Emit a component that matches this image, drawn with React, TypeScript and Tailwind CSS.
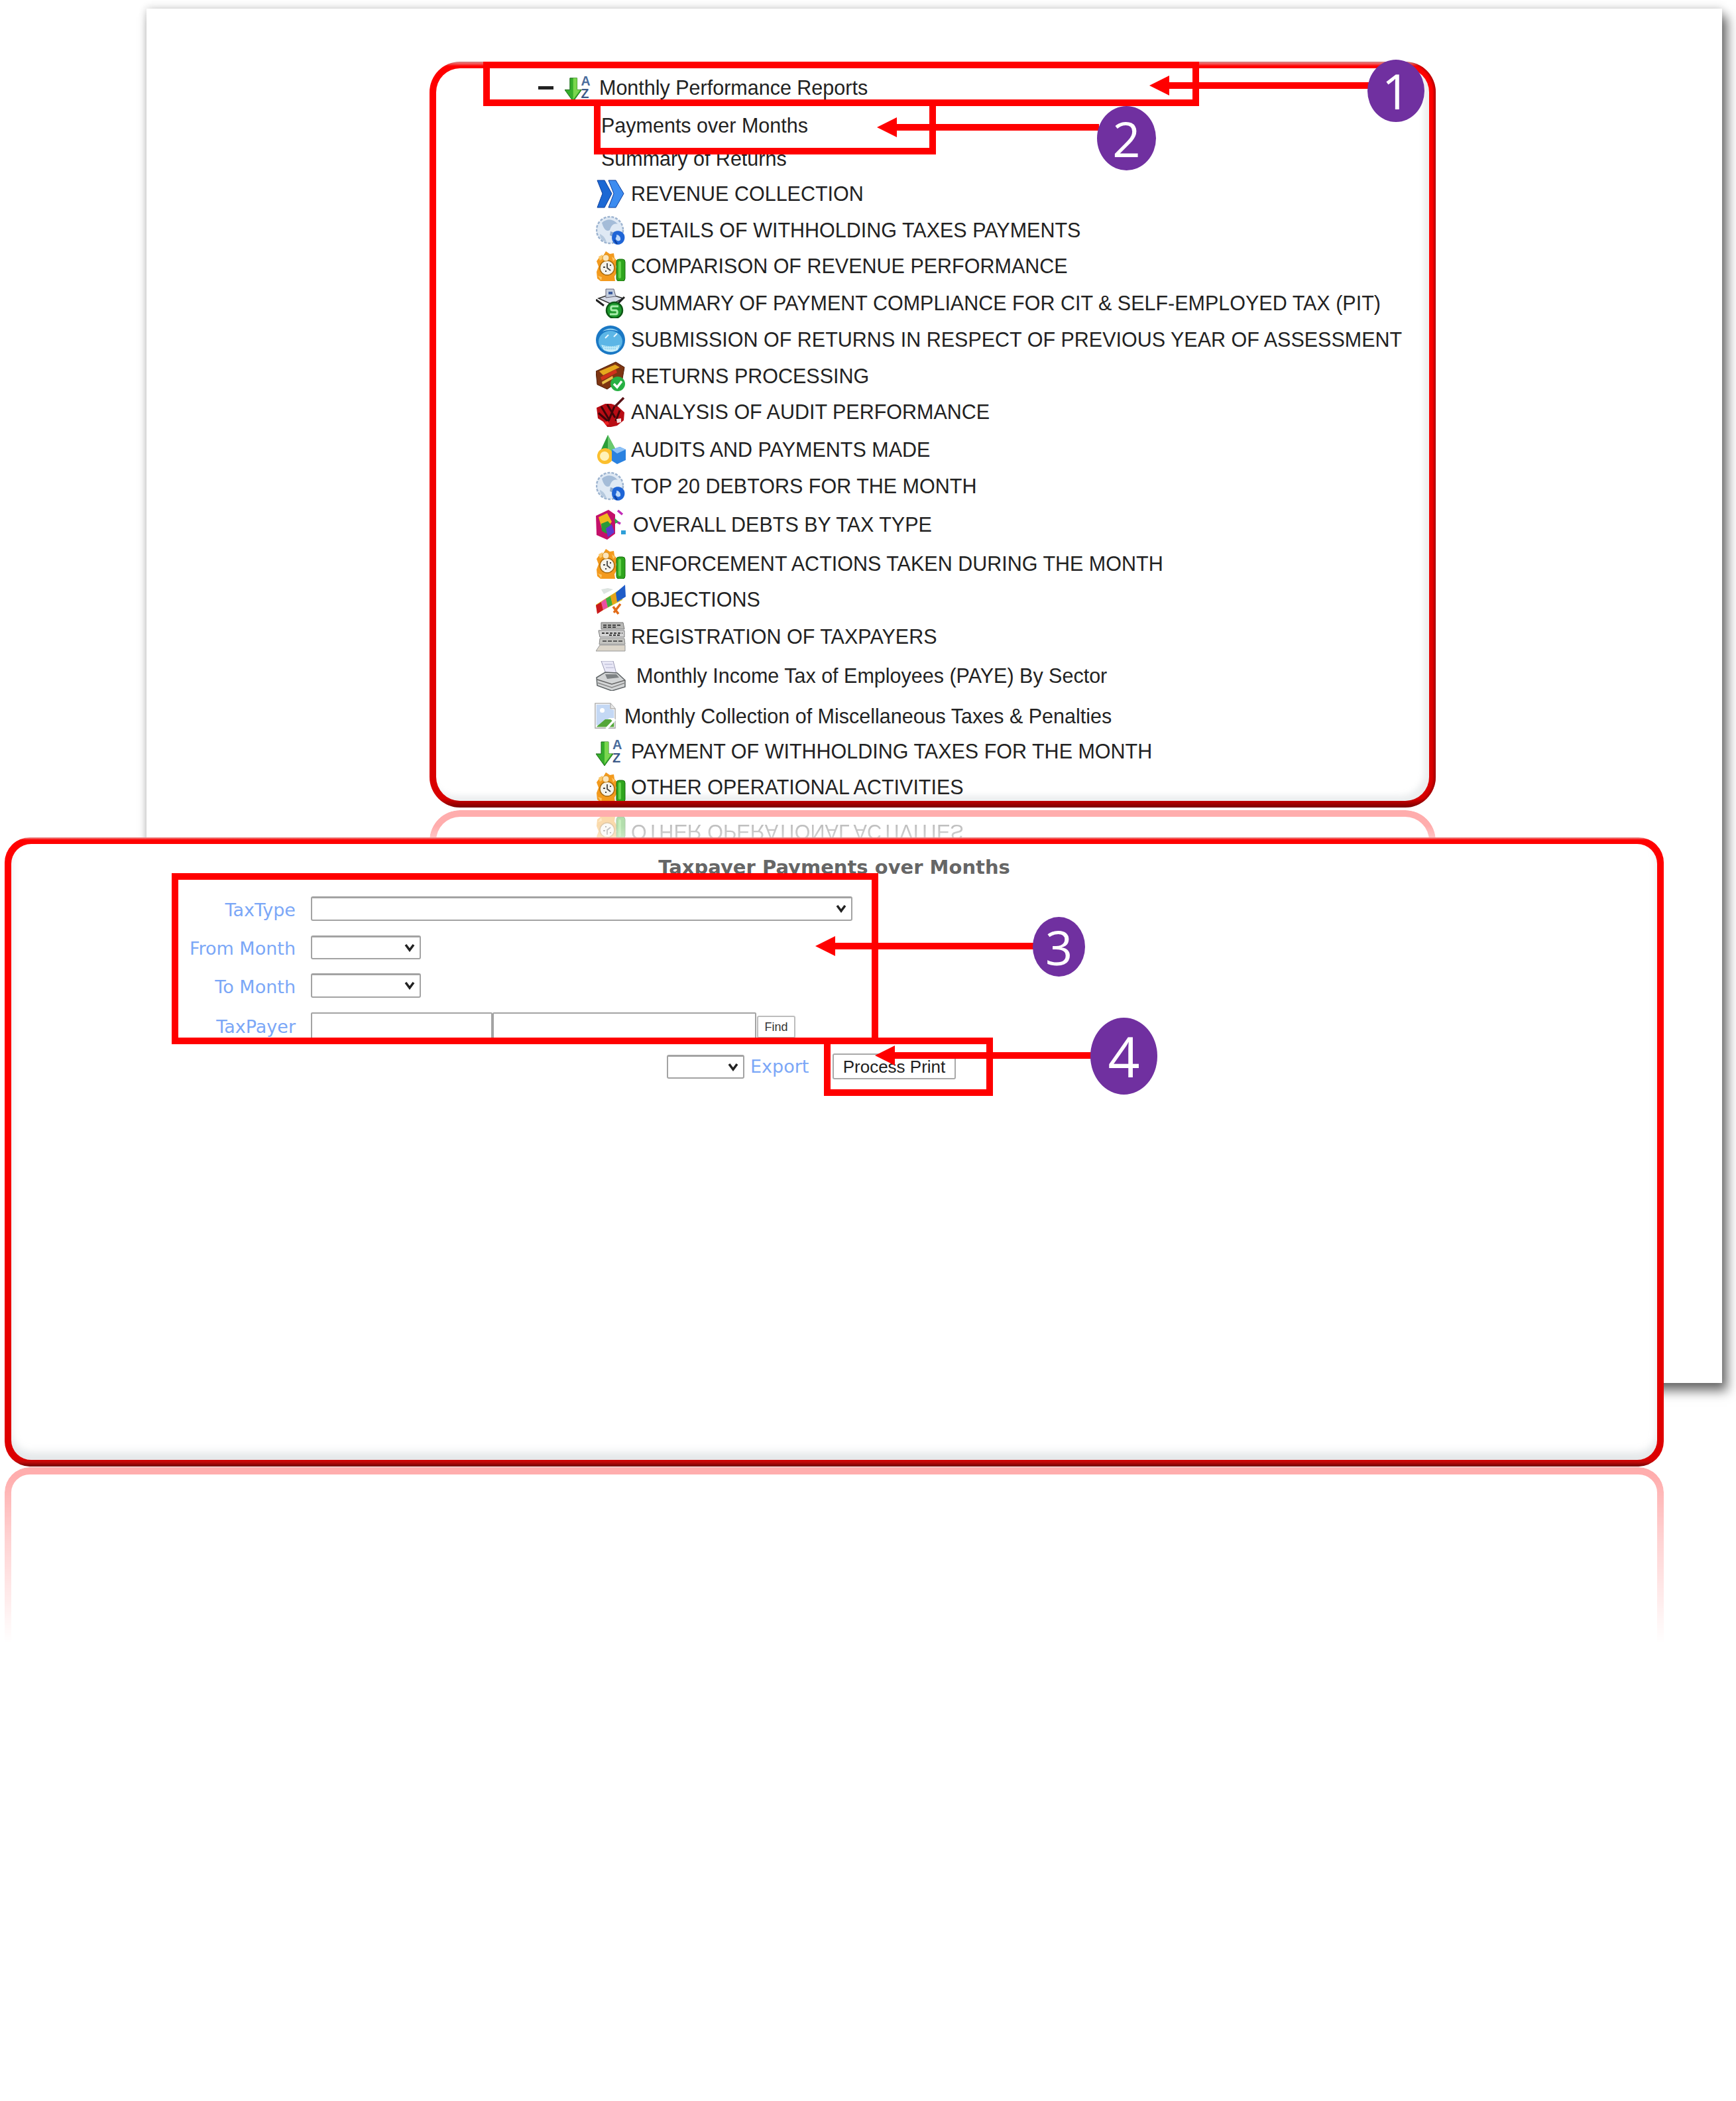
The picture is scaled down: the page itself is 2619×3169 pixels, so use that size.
type IconName =
  | 'chevrons' | 'globe' | 'clock' | 'scale' | 'sphere' | 'box' | 'blob'
  | 'cone' | 'cube' | 'rainbow' | 'stack' | 'printer' | 'broken' | 'arrowaz'

function ReportIcon({ name, className = 'h-[45px] w-[45px]' }: { name: IconName; className?: string }) {
  return (
    <svg viewBox="0 0 45 45" className={className}>
      {name === 'chevrons' && (
        <g fill="#1b68d4" stroke="#0d3f9c" strokeWidth="1">
          <path d="M2 2h11l11 20-11 21H2l8-21z" />
          <path d="M19 2h11l12 20-12 21H19l8-21z" fill="#3d8cf0" />
        </g>
      )}
      {name === 'globe' && (
        <g>
          <circle cx="21" cy="22" r="20" fill="#dfe9f4" stroke="#9db4d0" strokeWidth="2.5" strokeDasharray="4 2" />
          <path d="M9 11c8-7 17-6 24 2-7-2-10 3-12 9-5 3-9-1-12-11z" fill="#a4bcd8" />
          <path d="M6 28c5 2 8 6 10 12-6-1-10-6-10-12z" fill="#b6c9de" />
          <path d="M22 24l6 2-2 6-5-2z" fill="#88a6cc" />
          <path d="M27 25c6-4 14-1 16 5 2 7-3 14-10 14-8 0-12-11-6-19z" fill="#1f65d6" />
          <path d="M31 29c3 0 7 3 6 8-2 2-5 2-7-1-1-3 2-3 1-7z" fill="#bcd8fa" />
          <path d="M28 37l4 6" stroke="#0d3c98" strokeWidth="2" />
        </g>
      )}
      {name === 'clock' && (
        <g>
          <path d="M15 0l6 4 6-1 1 7 5 6-3 7 2 8-4 7 1 7H7l-5-4-1-10 3-8-3-8 5-7 5-1z" fill="#f39a1d" />
          <path d="M4 8l6-3 1 6-5 3zM24 8l5 4-3 3zM3 37l6 2-1 5z" fill="#fbc768" />
          <circle cx="17" cy="25" r="11" fill="#f4f2ea" stroke="#a86a0c" strokeWidth="1.5" />
          <circle cx="15" cy="10" r="5" fill="#fbe6bd" stroke="#d78e1c" />
          <path d="M17 18v7l5 4M11 24h3M21 21h2M14 30h2" stroke="#444" strokeWidth="1.8" fill="none" />
          <rect x="31" y="12" width="13" height="33" rx="4" fill="#2fa51d" stroke="#146b0a" />
          <rect x="34" y="15" width="4" height="26" rx="2" fill="#63d24a" />
        </g>
      )}
      {name === 'scale' && (
        <g>
          <path d="M4 15l18-6 19 6-17 9z" fill="#d6dbe6" stroke="#333" strokeWidth="1.5" />
          <path d="M15 1l12 0 3 11-15 2z" fill="#c4cede" stroke="#667" />
          <rect x="19" y="5" width="6" height="4" fill="#3e5c9c" />
          <path d="M0 17l12 9M43 13l-9 9" stroke="#222" strokeWidth="3" />
          <circle cx="28" cy="33" r="12" fill="#1e9a2e" stroke="#0d5615" strokeWidth="2.5" />
          <path d="M34 27h-9c-3 0-3 6 0 6h5c3 0 3 6 0 6h-9" stroke="#a8ecaa" strokeWidth="3" fill="none" />
        </g>
      )}
      {name === 'sphere' && (
        <g>
          <ellipse cx="22" cy="23" rx="22" ry="22" fill="#1a78c4" />
          <ellipse cx="22" cy="25" rx="18" ry="16" fill="#5cb6e6" />
          <path d="M8 30c9 3 20 3 28 0l-3 8c-7 4-15 3-21 0z" fill="#c9eefa" />
          <path d="M11 33h22M13 36h18" stroke="#7ccbec" strokeWidth="1.5" strokeDasharray="2 1" />
          <path d="M14 20l5-5M27 18l5-5" stroke="#e8f7ff" strokeWidth="2" />
          <path d="M10 10c6-6 18-6 24 0-8-3-16-3-24 0z" fill="#8fd0f2" />
        </g>
      )}
      {name === 'box' && (
        <g>
          <path d="M0 15L30 1l13 8-3 17-23 16L2 35z" fill="#7e3512" stroke="#4c1c06" />
          <path d="M5 15l24-10 7 4-25 12z" fill="#e6a81e" />
          <path d="M7 24l23-12 2 5-23 12z" fill="#d0301a" />
          <path d="M9 31l16-9 1 4-16 9z" fill="#eac04a" />
          <circle cx="33" cy="34" r="11" fill="#27b043" />
          <path d="M27 34l5 5 7-9" stroke="#fff" strokeWidth="3.5" fill="none" />
        </g>
      )}
      {name === 'blob' && (
        <g>
          <path d="M1 16l13-6 9 0 9 3 11 10-1 12-10 8-14 3-7-9-8-5z" fill="#b80c14" />
          <path d="M8 14l12 20M17 11l12 20M4 24l15 13M28 14l-9 22M36 20l-6 16" stroke="#3f0509" strokeWidth="3" fill="none" />
          <path d="M29 14L42 1" stroke="#5b1216" strokeWidth="3.5" />
          <path d="M31 33l7-1 0 6-6 1z" fill="#f6dada" />
          <path d="M12 38l6-2 2 5-5 1z" fill="#e22" />
        </g>
      )}
      {name === 'cone' && (
        <g>
          <path d="M18 0l14 26H6z" fill="#2c9e39" />
          <path d="M18 0l14 26H18z" fill="#69c96e" />
          <circle cx="14" cy="32" r="12" fill="#fbbf2e" />
          <circle cx="13" cy="32" r="7" fill="#fff2b8" />
          <path d="M24 22l12-4 9 4v16l-13 6-8-5z" fill="#2a82e0" />
          <path d="M36 18l9 4-13 6-8-6z" fill="#8cc1f6" />
        </g>
      )}
      {name === 'cube' && (
        <g>
          <path d="M0 9L19 0l10 7v29l-12 9-16-7z" fill="#c4106a" />
          <path d="M4 11l13-6 7 13-10 12-5-2z" fill="#f0b81e" />
          <path d="M8 21l10-4 7 8-9 11-7-4z" fill="#2a9a3a" />
          <path d="M15 28l9-6 4 12-10 7z" fill="#5b3bd0" />
          <path d="M33 1l7 6M30 17l7 4" stroke="#c12bb7" strokeWidth="3.5" />
          <rect x="38" y="31" width="7" height="6" fill="#2f9fd8" />
          <path d="M28 12l6 6-5 3z" fill="#2fa84a" />
        </g>
      )}
      {name === 'rainbow' && (
        <g>
          <path d="M0 30L38 6l2 17L2 43z" fill="#d8c02a" />
          <path d="M0 31l8-5 3 12-9 6z" fill="#c9181d" />
          <path d="M8 26l7-5 3 13-7 4z" fill="#e94fa2" />
          <path d="M15 21l7-4 3 13-7 4z" fill="#3fae3f" />
          <path d="M22 17l8-5 2 13-7 5z" fill="#e8a318" />
          <path d="M30 12l14-12 1 18-13 8z" fill="#1f5cc8" />
          <path d="M26 33l8 11M37 29l-10 13" stroke="#e26b18" strokeWidth="3.5" />
          <path d="M8 7l10-2 8 2-14 7z" fill="#dde4e0" />
        </g>
      )}
      {name === 'stack' && (
        <g>
          <path d="M8 1h33l2 10H8z" fill="#b8b8b6" stroke="#777" />
          <path d="M11 5h28M11 8h20" stroke="#444" strokeWidth="2" strokeDasharray="5 2" />
          <path d="M4 13h39v10H6z" fill="#d4d4d4" stroke="#777" />
          <path d="M9 17h31M20 20h16" stroke="#333" strokeWidth="2" strokeDasharray="4 2" />
          <path d="M6 25h37l1 9H5z" fill="#c4c4c0" stroke="#888" />
          <path d="M10 29h30" stroke="#555" strokeWidth="2" strokeDasharray="6 2" />
          <path d="M0 44l6-9h38v9z" fill="#dcd6ca" stroke="#999" />
        </g>
      )}
      {name === 'printer' && (
        <g>
          <path d="M8 0l18 0 5 19H15z" fill="#e9e8f6" stroke="#9a9ab4" />
          <path d="M13 5l12 0M15 10l12 0" stroke="#c3c3dc" strokeWidth="1.5" />
          <path d="M1 25l13-8 18 1 12 11v10L24 45 2 37z" fill="#d3d5d6" stroke="#5f6466" strokeWidth="1.5" />
          <path d="M2 28l22 7 20-6" stroke="#666" strokeWidth="1.5" fill="none" />
          <path d="M3 33l21 7 20-7" stroke="#888" strokeWidth="1.5" fill="none" />
          <path d="M14 20l17 0 4 5-18 2z" fill="#7e8284" />
        </g>
      )}
      {name === 'broken' && (
        <g>
          <path d="M1 1h26l8 9v33H1z" fill="#fff" stroke="#a8a8a8" strokeWidth="1.5" />
          <path d="M27 1v9h8" fill="#e8e8e8" stroke="#a8a8a8" strokeWidth="1.5" />
          <path d="M3 3h23v8l7 1v14l-8 0-14 12H3z" fill="#c4d8f4" />
          <circle cx="13" cy="13" r="4" fill="#fff" />
          <path d="M4 40l14-12 9 0 6 5v8H4z" fill="#54a63a" />
          <path d="M20 44l15-16" stroke="#fff" strokeWidth="4" />
        </g>
      )}
      {name === 'arrowaz' && (
        <g>
          <path d="M8 8h11v18h7L13 44 0 26h8z" fill="#35ad2b" stroke="#1b6a15" />
          <path d="M13 8h6v18h5L13 41z" fill="#7ad64e" />
          <text x="25" y="19" fontSize="20" fontWeight="700" fill="#4a6c9c" fontFamily="Liberation Sans, sans-serif">A</text>
          <text x="25" y="39" fontSize="20" fontWeight="700" fill="#3d5a88" fontFamily="Liberation Sans, sans-serif">Z</text>
        </g>
      )}
    </svg>
  )
}

const REPORTS: { icon: IconName; label: string; gap: string; textGap?: string }[] = [
  { icon: 'chevrons', label: 'REVENUE COLLECTION', gap: 'mt-[8px]' },
  { icon: 'globe', label: 'DETAILS OF WITHHOLDING TAXES PAYMENTS', gap: 'mt-[5px]' },
  { icon: 'clock', label: 'COMPARISON OF REVENUE PERFORMANCE', gap: 'mt-[4px]' },
  { icon: 'scale', label: 'SUMMARY OF PAYMENT COMPLIANCE FOR CIT & SELF-EMPLOYED TAX (PIT)', gap: 'mt-[6px]' },
  { icon: 'sphere', label: 'SUBMISSION OF RETURNS IN RESPECT OF PREVIOUS YEAR OF ASSESSMENT', gap: 'mt-[5px]' },
  { icon: 'box', label: 'RETURNS PROCESSING', gap: 'mt-[5px]' },
  { icon: 'blob', label: 'ANALYSIS OF AUDIT PERFORMANCE', gap: 'mt-[4px]' },
  { icon: 'cone', label: 'AUDITS AND PAYMENTS MADE', gap: 'mt-[7px]' },
  { icon: 'globe', label: 'TOP 20 DEBTORS FOR THE MONTH', gap: 'mt-[5px]' },
  { icon: 'cube', label: 'OVERALL DEBTS BY TAX TYPE', gap: 'mt-[8px]', textGap: 'ml-[11px]' },
  { icon: 'clock', label: 'ENFORCEMENT ACTIONS TAKEN DURING THE MONTH', gap: 'mt-[9px]' },
  { icon: 'rainbow', label: 'OBJECTIONS', gap: 'mt-[4px]' },
  { icon: 'stack', label: 'REGISTRATION OF TAXPAYERS', gap: 'mt-[6px]' },
  { icon: 'printer', label: 'Monthly Income Tax of Employees (PAYE) By Sector', gap: 'mt-[9px]', textGap: 'ml-[16px]' },
  { icon: 'broken', label: 'Monthly Collection of Miscellaneous Taxes & Penalties', gap: 'mt-[11px]', textGap: 'ml-[5px]' },
  { icon: 'arrowaz', label: 'PAYMENT OF WITHHOLDING TAXES FOR THE MONTH', gap: 'mt-[3px]' },
  { icon: 'clock', label: 'OTHER OPERATIONAL ACTIVITIES', gap: 'mt-[4px]' },
]

function Dropdown({ className }: { className: string }) {
  return (
    <div className={`relative ${className}`}>
      <select className="h-full w-full appearance-none rounded-[3px] border-2 border-t-[3px] border-[#a3a3a3] bg-white" />
      <svg viewBox="0 0 18 13" className="pointer-events-none absolute right-[8px] top-[12px] h-[13px] w-[18px]">
        <path d="M3 2l6 8 6-8" fill="none" stroke="#222" strokeWidth="3.5" />
      </svg>
    </div>
  )
}

function Badge({ n, className, text }: { n: number; className: string; text: string }) {
  return (
    <div className={`absolute z-30 flex items-center justify-center rounded-[50%] bg-[#7030a0] font-['Open_Sans',sans-serif] leading-none text-white ${text} ${className}`}>
      {n}
    </div>
  )
}

// horizontal pointer: tip on the left, shaft running right into the badge
function Arrow({ className }: { className: string }) {
  return (
    <div className={`absolute z-20 flex h-[30px] items-center ${className}`}>
      <svg viewBox="0 0 30 30" className="h-[30px] w-[30px] shrink-0">
        <path d="M0 15L30 0v30z" fill="#ff0000" />
      </svg>
      <div className="h-[10px] flex-1 bg-[#ff0000]" />
    </div>
  )
}

export default function App() {
  return (
    <div className="relative h-[3169px] w-[2619px] overflow-hidden bg-white pl-[221px] pt-[13px] font-['Liberation_Sans',Arial,sans-serif]">
      {/* back sheet with the report tree */}
      <div className="h-[2073px] w-[2377px] bg-white pl-[427px] pt-[80px] shadow-[8px_12px_16px_rgba(0,0,0,0.55),0_0_12px_rgba(0,0,0,0.2)]">
        <div className="relative z-10 h-[1125px] w-[1518px] rounded-[46px] bg-[linear-gradient(to_bottom,#e8a0a0_0%,#ff0000_0.6%,#ff0000_35%,#d80000_98.8%,#b80000_99.2%,#7a0000_100%)] p-[10px] shadow-[inset_-3px_0_3px_rgba(110,0,0,0.5)]">
          <div className="h-full overflow-hidden rounded-[36px] bg-white pt-[2px] text-[30.5px] leading-none text-[#222] shadow-[inset_-8px_-8px_8px_rgba(150,160,165,0.18)]">
            <div className="flex h-[54px] items-center pl-[154px]">
              <div className="h-[5px] w-[23px] bg-[#222]" />
              <ReportIcon name="arrowaz" className="ml-[17px] h-[44px] w-[44px]" />
              <span className="ml-[8px]">Monthly Performance Reports</span>
            </div>
            <div className="flex h-[60px] items-center pl-[249px]">Payments over Months</div>
            <div className="flex h-[40px] items-center pl-[249px]">Summary of Returns</div>
            {REPORTS.map((r) => (
              <div key={r.label} className={`flex h-[50px] items-center pl-[241px] ${r.gap}`}>
                <ReportIcon name={r.icon} className={r.icon === 'broken' ? '-ml-[2px] h-[40px] w-[40px] shrink-0' : 'h-[45px] w-[45px] shrink-0'} />
                <span className={`whitespace-nowrap ${r.textGap ?? 'ml-[8px]'}`}>{r.label}</span>
              </div>
            ))}
          </div>
        </div>
      </div>

      {/* reflection of the upper panel */}
      <div className="absolute left-[648px] top-[1222px] h-[60px] w-[1518px] rounded-t-[46px] border-x-[10px] border-t-[10px] border-[#ffadad] pl-[241px] [mask-image:linear-gradient(to_bottom,black_40%,rgba(0,0,0,0.4)_100%)]">
        <div className="flex -scale-y-100 items-center pt-[2px] text-[30.5px] leading-none text-[#b9b9b9] opacity-90">
          <ReportIcon name="clock" className="h-[45px] w-[45px] shrink-0 opacity-40" />
          <span className="ml-[8px]">OTHER OPERATIONAL ACTIVITIES</span>
        </div>
      </div>

      {/* front panel with the form */}
      <div className="absolute left-[7px] top-[1263px] z-10 h-[949px] w-[2503px] rounded-[38px] bg-[linear-gradient(to_bottom,#e8a0a0_0%,#ff0000_0.4%,#ff0000_45%,#dc0000_98.8%,#c00a0a_99.3%,#6f0000_100%)] p-[10px]">
        <div className="h-full rounded-[30px] bg-white shadow-[inset_0_-12px_12px_rgba(150,165,170,0.25)]">
          <h1 className="pt-[17px] text-center font-['DejaVu_Sans',sans-serif] text-[29px] font-bold leading-[36px] text-[#666]">
            Taxpayer Payments over Months
          </h1>
          <div className="font-['DejaVu_Sans',sans-serif] text-[27px] leading-none text-[#7ba7f7]">
            <div className="mt-[26px] flex h-[37px]">
              <span className="flex w-[429px] items-center justify-end pt-[4px]">TaxType</span>
              <Dropdown className="ml-[23px] w-[817px]" />
            </div>
            <div className="mt-[22px] flex h-[36px]">
              <span className="flex w-[429px] items-center justify-end pt-[2px]">From Month</span>
              <Dropdown className="ml-[23px] w-[166px]" />
            </div>
            <div className="mt-[21px] flex h-[37px]">
              <span className="flex w-[429px] items-center justify-end pt-[4px]">To Month</span>
              <Dropdown className="ml-[23px] w-[166px]" />
            </div>
            <div className="mt-[22px] flex h-[40px]">
              <span className="flex w-[429px] items-center justify-end pt-[3px]">TaxPayer</span>
              <input className="ml-[23px] h-full w-[274px] rounded-[2px] border-2 border-[#a3a3a3] bg-white" />
              <input className="h-full w-[398px] rounded-[2px] border-2 border-[#a3a3a3] bg-white" />
              <button className="ml-[1px] mt-[5px] h-[34px] w-[58px] rounded-[3px] border-2 border-[#bdbdbd] bg-white font-['Liberation_Sans',sans-serif] text-[18px] text-[#333]">
                Find
              </button>
            </div>
            <div className="mt-[22px] flex h-[39px] items-center pl-[989px]">
              <Dropdown className="h-[36px] w-[117px]" />
              <span className="ml-[9px] w-[124px]">Export</span>
              <button className="h-[39px] w-[186px] rounded-[3px] border-2 border-[#a9a9a9] bg-white font-['Liberation_Sans',sans-serif] text-[26px] text-[#222]">
                Process Print
              </button>
            </div>
          </div>
        </div>
      </div>

      {/* reflection of the front panel */}
      <div className="absolute left-[7px] top-[2213px] h-[265px] w-[2503px] rounded-t-[38px] border-x-[10px] border-t-[11px] border-[#ffadad] [mask-image:linear-gradient(to_bottom,black_5%,rgba(0,0,0,0.55)_40%,transparent_100%)]" />

      {/* annotation boxes */}
      <div className="absolute left-[729px] top-[93px] z-20 h-[67px] w-[1080px] border-[10px] border-[#ff0000]" />
      <div className="absolute left-[896px] top-[160px] z-20 h-[73px] w-[516px] border-[10px] border-t-0 border-[#ff0000]" />
      <div className="absolute left-[259px] top-[1317px] z-20 h-[258px] w-[1066px] border-[10px] border-[#ff0000]" />
      <div className="absolute left-[1243px] top-[1565px] z-20 h-[88px] w-[255px] border-[10px] border-[#ff0000]" />

      <Arrow className="left-[1734px] top-[114px] w-[334px]" />
      <Arrow className="left-[1323px] top-[177px] w-[335px]" />
      <Arrow className="left-[1230px] top-[1412px] w-[330px]" />
      <Arrow className="left-[1320px] top-[1577px] w-[330px]" />

      <Badge n={1} text="text-[74px]" className="left-[2063px] top-[90px] h-[94px] w-[86px]" />
      <Badge n={2} text="text-[74px]" className="left-[1655px] top-[160px] h-[97px] w-[89px]" />
      <Badge n={3} text="text-[72px]" className="left-[1558px] top-[1383px] h-[90px] w-[79px]" />
      <Badge n={4} text="text-[84px]" className="left-[1645px] top-[1535px] h-[116px] w-[101px]" />
    </div>
  )
}
